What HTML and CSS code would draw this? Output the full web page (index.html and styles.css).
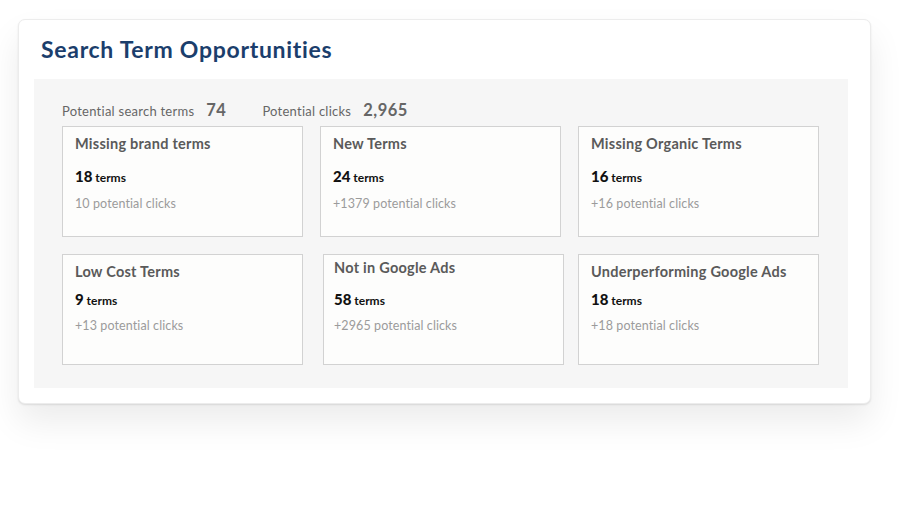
FILE: index.html
```html
<!DOCTYPE html>
<html>
<head>
<meta charset="utf-8">
<link rel="stylesheet" href="styles.css">
</head>
<body>
<div class="card">
  <h1 class="title">Search Term Opportunities</h1>
  <div class="panel">
    <div class="stats">
      <span class="stat-label">Potential search terms</span><span class="stat-value">74</span>
      <span class="stat-label gap">Potential clicks</span><span class="stat-value">2,965</span>
    </div>
    <div class="grid">
      <div class="tile r1">
        <div class="t-title">Missing brand terms</div>
        <div class="t-terms"><b>18</b> terms</div>
        <div class="t-clicks">10 potential clicks</div>
      </div>
      <div class="tile r1">
        <div class="t-title">New Terms</div>
        <div class="t-terms"><b>24</b> terms</div>
        <div class="t-clicks">+1379 potential clicks</div>
      </div>
      <div class="tile r1">
        <div class="t-title">Missing Organic Terms</div>
        <div class="t-terms"><b>16</b> terms</div>
        <div class="t-clicks">+16 potential clicks</div>
      </div>
      <div class="tile r2">
        <div class="t-title">Low Cost Terms</div>
        <div class="t-terms"><b>9</b> terms</div>
        <div class="t-clicks">+13 potential clicks</div>
      </div>
      <div class="tile r2 shifted">
        <div class="t-title">Not in Google Ads</div>
        <div class="t-terms"><b>58</b> terms</div>
        <div class="t-clicks">+2965 potential clicks</div>
      </div>
      <div class="tile r2">
        <div class="t-title">Underperforming Google Ads</div>
        <div class="t-terms"><b>18</b> terms</div>
        <div class="t-clicks">+18 potential clicks</div>
      </div>
    </div>
  </div>
</div>
</body>
</html>
```
FILE: styles.css
```css
html, body {
  margin: 0;
  padding: 0;
  background: #ffffff;
  width: 900px;
  height: 506px;
  overflow: hidden;
  font-family: Lato, "Open Sans", sans-serif;
}

.card {
  margin: 19px 0 0 18px;
  width: 853px;
  height: 385px;
  box-sizing: border-box;
  background: #ffffff;
  border: 1px solid #ececec;
  border-radius: 7px;
  box-shadow: 0 1px 2px rgba(0,0,0,0.10), 0 18px 34px rgba(0,0,0,0.08);
  padding: 14px 22px 0 15px;
}

.title {
  margin: 0 0 0 7px;
  font-size: 23px;
  line-height: 30px;
  font-weight: 700;
  color: #1b3e6c;
  letter-spacing: 0.7px;
}

.panel {
  margin-top: 15px;
  width: 814px;
  height: 309px;
  box-sizing: border-box;
  background: #f6f6f6;
  padding: 19px 0 0 28px;
}

.stats {
  display: flex;
  align-items: baseline;
  height: 24px;
  line-height: 24px;
}

.stat-label {
  font-size: 13px;
  color: #666666;
  letter-spacing: 0.25px;
}

.stat-label.gap {
  margin-left: 36px;
}

.stat-value {
  font-size: 16.5px;
  font-weight: 700;
  color: #666666;
  margin-left: 12px;
  letter-spacing: 0.5px;
}

.grid {
  margin-top: 4px;
  display: grid;
  grid-template-columns: 241px 241px 241px;
  grid-auto-rows: 111px;
  column-gap: 17px;
  row-gap: 17px;
}

.tile {
  box-sizing: border-box;
  border: 1px solid #d2d2d2;
  background: #fdfdfc;
  padding-left: 12px;
  display: flex;
  flex-direction: column;
}

.shifted {
  margin-left: 3px;
  margin-right: -3px;
  padding-left: 10px;
}

.t-title {
  font-size: 14.5px;
  line-height: 20px;
  font-weight: 700;
  color: #5a5a5a;
  letter-spacing: 0.25px;
}

.t-terms {
  font-size: 12px;
  line-height: 20px;
  font-weight: 700;
  color: #111111;
}

.t-terms b {
  font-size: 15px;
}

.t-clicks {
  font-size: 12.5px;
  line-height: 20px;
  color: #9b9b9b;
  letter-spacing: 0.1px;
}

.r1 { padding-top: 7px; }
.r1 .t-terms { margin-top: 12px; }
.r1 .t-clicks { margin-top: 6px; }

.r2 { padding-top: 7px; }
.r2 .t-terms { margin-top: 7px; }
.r2 .t-clicks { margin-top: 5px; }

.r2.shifted { padding-top: 3px; }
.r2.shifted .t-terms { margin-top: 11px; }
```
